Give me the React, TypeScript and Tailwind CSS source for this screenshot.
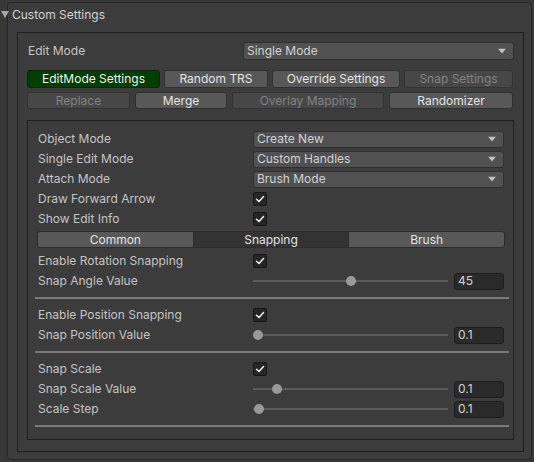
import React from 'react';

const Dropdown: React.FC<{ value: string; className?: string }> = ({ value, className = '' }) => (
    <div
        className={`relative flex items-center rounded-[3px] border border-[#303030] bg-[#515151] pl-[3px] text-[#d2d2d2] ${className}`}
    >
        <span>{value}</span>
        <svg className="absolute right-[7px] top-1/2 -translate-y-1/2" width="8" height="5" viewBox="0 0 8 5">
            <polygon points="0,0 8,0 4,5" fill="#c4c4c4" />
        </svg>
    </div>
);

const Check: React.FC = () => (
    <div className="flex h-[14px] w-[14px] items-center justify-center rounded-[2px] border border-[#161616] bg-[#262626]">
        <svg width="10" height="10" viewBox="0 0 10 10">
            <polyline points="1.5,5.2 4,7.5 8.5,2.5" fill="none" stroke="#f0f0f0" strokeWidth="1.5" strokeLinecap="round" strokeLinejoin="round" />
        </svg>
    </div>
);

const Slider: React.FC<{ f: number; value: string }> = ({ f, value }) => (
    <div className="flex flex-1 items-center">
        <div className="relative h-[10px] flex-1">
            <div className="absolute left-0 right-0 top-[4px] h-[2px] bg-[#5b5b5b]" />
            <div
                className="absolute top-0 h-[10px] w-[10px] rounded-full bg-[#999999]"
                style={{ left: `calc(${f} * (100% - 10px))` }}
            />
        </div>
        <div className="ml-[6px] mr-[1px] flex h-[17px] w-[50px] items-center rounded-[3px] border border-[#1e1e1e] bg-[#2a2a2a] pl-[3px] text-[#d2d2d2]">
            {value}
        </div>
    </div>
);

const Row: React.FC<{ label: string; children?: React.ReactNode }> = ({ label, children }) => (
    <div className="flex h-[20px] items-center">
        <div className="w-[216px] pl-[1px]">{label}</div>
        <div className="flex flex-1 items-center">{children}</div>
    </div>
);

const Separator: React.FC = () => <div className="-ml-[2px] -mr-[4px] my-[6px] h-[2px] bg-[#7a7a7a]" />;

const Btn: React.FC<{ label: string; w: string; disabled?: boolean; green?: boolean }> = ({ label, w, disabled, green }) => {
    let cls = 'bg-[#585858] border-[#303030] text-[#e4e4e4]';
    if (disabled) cls = 'bg-[#474747] border-[#333333] text-[#828282]';
    if (green) cls = 'bg-[#013e01] border-[#0b240b] text-[#f0f0f0]';
    return (
        <div className={`flex h-full items-center justify-center rounded-[3px] border ${cls} ${w}`}>
            {label}
        </div>
    );
};

export default function App() {
    return (
        <div className="relative h-[462px] w-[534px] overflow-hidden bg-[#383838] font-[Inter,sans-serif] text-[12px] leading-none text-[#c4c4c4]">
            <div className="ml-[7px] mt-[2px] flex h-[458px] w-[525px] flex-col rounded-[4px] border border-[#262626] bg-[#3c3c3c]">
                <div className="flex h-[23px] items-center pl-[4px] text-[#d2d2d2]">Custom Settings</div>

                <div className="ml-[9px] mt-[6px] flex h-[420px] w-[507px] flex-col border border-[#1f1f1f] px-[9px] pt-[9px]">
                    <div className="flex h-[18px] items-center">
                        <div className="w-[216px] pl-[1px]">Edit Mode</div>
                        <Dropdown value="Single Mode" className="h-[18px] flex-1" />
                    </div>

                    <div className="mt-[10px] flex h-[18px] gap-[4px]">
                        <Btn label="EditMode Settings" w="w-[133px]" green />
                        <Btn label="Random TRS" w="w-[104px]" />
                        <Btn label="Override Settings" w="w-[128px]" />
                        <Btn label="Snap Settings" w="w-[109px]" disabled />
                    </div>
                    <div className="mt-[4px] flex h-[17px] gap-[5px]">
                        <Btn label="Replace" w="w-[103px]" disabled />
                        <Btn label="Merge" w="w-[92px]" />
                        <Btn label="Overlay Mapping" w="w-[152px]" disabled />
                        <Btn label="Randomizer" w="w-[124px]" />
                    </div>

                    <div className="mt-[11px] flex h-[320px] flex-col border border-[#1f1f1f] pl-[9px] pr-[8px] pt-[8px]">
                        <Row label="Object Mode">
                            <Dropdown value="Create New" className="mr-[1px] h-[17px] flex-1" />
                        </Row>
                        <Row label="Single Edit Mode">
                            <Dropdown value="Custom Handles" className="mr-[1px] h-[17px] flex-1" />
                        </Row>
                        <Row label="Attach Mode">
                            <Dropdown value="Brush Mode" className="mr-[1px] h-[17px] flex-1" />
                        </Row>
                        <Row label="Draw Forward Arrow">
                            <Check />
                        </Row>
                        <Row label="Show Edit Info">
                            <Check />
                        </Row>

                        <div className="mb-[3px] mt-[2px] flex h-[17px] text-[#e4e4e4]">
                            <div className="flex flex-1 items-center justify-center rounded-l-[3px] border border-[#2c2c2c] bg-[#585858]">Common</div>
                            <div className="flex flex-1 items-center justify-center border-y border-[#2c2c2c] bg-[#333333]">Snapping</div>
                            <div className="flex flex-1 items-center justify-center rounded-r-[3px] border border-[#2c2c2c] bg-[#585858]">Brush</div>
                        </div>

                        <Row label="Enable Rotation Snapping">
                            <Check />
                        </Row>
                        <Row label="Snap Angle Value">
                            <Slider f={0.5} value="45" />
                        </Row>
                        <Separator />
                        <Row label="Enable Position Snapping">
                            <Check />
                        </Row>
                        <Row label="Snap Position Value">
                            <Slider f={0} value="0.1" />
                        </Row>
                        <Separator />
                        <Row label="Snap Scale">
                            <Check />
                        </Row>
                        <Row label="Snap Scale Value">
                            <Slider f={0.1} value="0.1" />
                        </Row>
                        <Row label="Scale Step">
                            <Slider f={0.005} value="0.1" />
                        </Row>
                        <Separator />
                    </div>
                </div>
            </div>

            <svg className="absolute left-[1px] top-[11px]" width="8" height="7" viewBox="0 0 8 7">
                <polygon points="0,0 8,0 4,7" fill="#a8a8a8" />
            </svg>
        </div>
    );
}
